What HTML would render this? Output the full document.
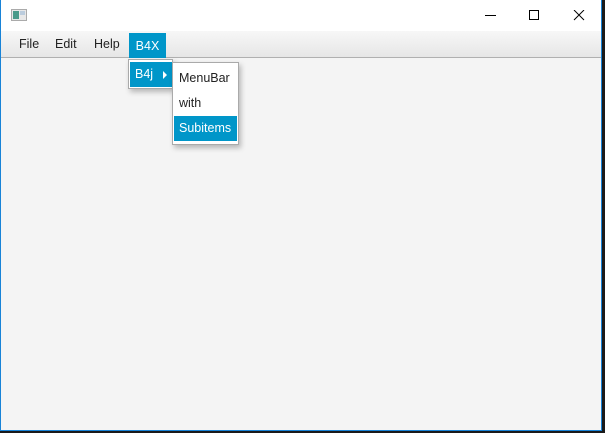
<!DOCTYPE html>
<html><head><style>
body{margin:0;width:605px;height:433px;background:#1a1a1a;overflow:hidden;font-family:"Liberation Sans",sans-serif;position:relative}
.win{position:absolute;left:0;top:0;width:602px;height:431px;border:1px solid #1883d7;border-top:none;background:#f4f4f4;box-sizing:border-box}
.title{position:absolute;left:0;top:0;width:100%;height:31px;background:#fff}
.menubar{position:absolute;left:0;top:31px;width:100%;height:26px;background:linear-gradient(#f7f7f7,#e6e6e6);border-bottom:1px solid #b0b0b0}
.m{position:absolute;top:0;height:26px;line-height:26px;font-size:12.5px;color:#222}
.it{position:absolute;left:1px;right:1px;height:25px;line-height:25px;font-size:12.5px;color:#222;padding-left:5px}
.sel,.it.sel,.m.sel{background:#0096c9;color:#fff}
.pop{position:absolute;background:#fff;border:1px solid #aaa;box-shadow:2px 3px 5px rgba(0,0,0,.25)}
</style></head><body>
<div class="win">
<div class="title">
<svg style="position:absolute;left:10px;top:9px" width="16" height="12"><rect x="0.5" y="0.5" width="15" height="11" fill="#e8e8e8" stroke="#aaa"/><rect x="2" y="2" width="6" height="8" fill="#4a9a8a"/><rect x="9" y="2" width="5" height="4" fill="#bcd"/></svg>
<svg style="position:absolute;left:484px;top:10px" width="100" height="12"><line x1="0" y1="5.5" x2="11" y2="5.5" stroke="#000"/><rect x="44.5" y="0.5" width="9" height="9" fill="none" stroke="#000"/><path d="M89 0L99 10M99 0L89 10" stroke="#000"/></svg>
</div>
<div class="menubar">
<div class="m" style="left:18px">File</div>
<div class="m" style="left:54px">Edit</div>
<div class="m" style="left:93px">Help</div>
<div class="m sel" style="left:128px;width:37px;text-align:center;top:2px;height:25px">B4X</div>
</div>
<div class="pop" style="left:127px;top:59px;width:45px;height:30px;box-sizing:border-box">
<div class="it sel" style="top:2px;left:1px;right:0">B4j<span style="position:absolute;left:33px;top:9px;width:0;height:0;border-left:4px solid #fff;border-top:4px solid transparent;border-bottom:4px solid transparent"></span></div>
</div>
<div class="pop" style="left:171px;top:62px;width:67px;height:83px;box-sizing:border-box">
<div class="it" style="top:3px">MenuBar</div>
<div class="it" style="top:28px">with</div>
<div class="it sel" style="top:53px">Subitems</div>
</div>
</div>
</body></html>
